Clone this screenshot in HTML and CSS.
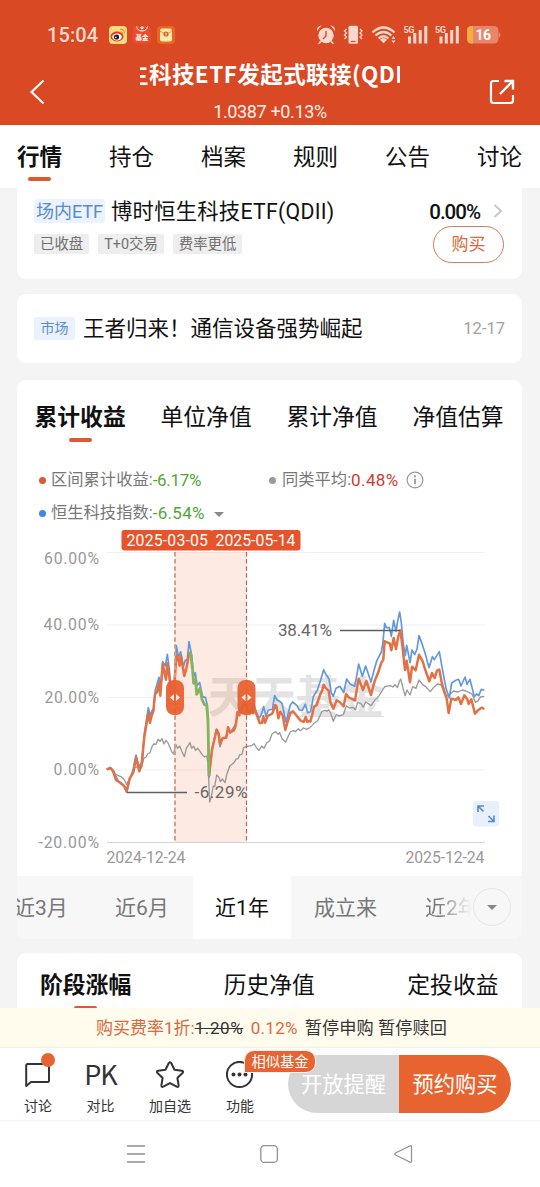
FILE: index.html
```html
<!DOCTYPE html>
<html lang="zh-CN">
<head>
<meta charset="utf-8">
<title>博时恒生科技ETF发起式联接(QDII)</title>
<link rel="stylesheet" href="styles.css">
</head>
<body>
<div class="phone">
  <header class="header">
    <div class="status">
      <span class="clock">15:04</span>
      <svg class="apps" width="68" height="20" viewBox="0 0 68 20">
        <rect x="1" y="1" width="18" height="18" rx="4" fill="#fbdc80"/>
        <ellipse cx="9" cy="11.5" rx="6.5" ry="5" fill="#df3b28"/>
        <ellipse cx="9" cy="12" rx="4.8" ry="3.4" fill="#fff"/>
        <circle cx="8.5" cy="12" r="2.6" fill="#231815"/><circle cx="7.8" cy="12.4" r=".8" fill="#fff"/>
        <path d="M12 4.500c3-.8 5 1.500 4.400 4M12.500 7c1.400-.2 2.200.600 2 1.800" fill="none" stroke="#e99a31" stroke-width="1.200"/>
        <rect x="25" y="1" width="18" height="18" rx="4" fill="#f04a2c"/>
        <path d="M28.500 1.500q1 4.500 5.500 4.500t5.500-4.500M34 1v3.500M32 2l2 2 2-2" fill="none" stroke="#fff" stroke-width="1"/>
        <text x="27.500" y="15.300" textLength="13" class="app-text">基金</text>
        <rect x="49" y="1" width="18" height="18" rx="4" fill="#e8671e"/>
        <rect x="52" y="3.500" width="12" height="13" rx="2" fill="#ffe9ad"/>
        <path d="M52 6q6 5 12 0" fill="none" stroke="#e79a52" stroke-width="1"/><circle cx="58" cy="9" r="2.600" fill="#d96827"/><path d="M58 7.700v2.600" stroke="#ffe9ad"/>
      </svg>
      <svg class="signals" width="186" height="22" viewBox="315 24 186 22">
        <g fill="#fbd8cd" stroke="none">
          <circle cx="326" cy="35.500" r="7.700"/><path d="M317 31q-.5-5 4.500-5.500zM335 31q.5-5-4.500-5.500zM320 41l-2 2.500 1 .7 3-2.500zM332 41l2 2.500-1 .7-3-2.500z"/>
          <rect x="348.500" y="25.700" width="9.500" height="18" rx="1.500"/>
          <path d="M383.500 43.300l-3.500-3.500a5 5 0 0 1 7 0z"/>
          <path d="M391.500 39l2-3 2 3zM391.500 40.500h4l-2 3z"/>
          <path d="M408 36.500h3v7h-3zM413.300 33h3v10.500h-3zM418.700 30h3v13.500h-3zM424.300 26h3v17.500h-3zM439.500 36.500h3v7h-3zM444.800 33h3v10.500h-3zM450.200 30h3v13.500h-3zM455.800 26h3v17.500h-3z"/>
        </g>
        <path d="M326 31v5l-3 3" fill="none" stroke="#d94a24" stroke-width="1.400"/>
        <path d="M351 41.500h4.500" stroke="#d94a24" stroke-width="1.200"/>
        <path d="M346.500 29l-2 2 2 2-2 2 2 2-2 2M360 29l2 2-2 2 2 2-2 2 2 2" fill="none" stroke="#fbd8cd" stroke-width="1.300"/>
        <path d="M372.500 32.500q11-10 22 0M375.500 35.500q8-7 16 0M378.500 38.500q5-4.500 10 0" fill="none" stroke="#fbd8cd" stroke-width="2.200"/>
        <text x="403.500" y="32.500" textLength="11" class="net">5G</text>
        <text x="435" y="32.500" textLength="11" class="net">5G</text>
        <rect x="467" y="26" width="31.500" height="17.500" rx="4.500" fill="#e9866a"/>
        <path d="M473 26h-1.500a4.500 4.500 0 0 0-4.500 4.500v8.500a4.500 4.500 0 0 0 4.500 4.500h1.500z" fill="#f6ad42"/>
        <path d="M499 32l1.800 3-1.800 3z" fill="#e9866a"/>
        <text x="475.500" y="40" textLength="15.500" class="battery">16</text>
      </svg>
    </div>
    <div class="titlebar">
      <svg class="back" width="18" height="26" viewBox="0 0 18 26"><path d="M15.500 1.500L3.500 13l12 11.500" fill="none" stroke="#fff" stroke-width="2.100"/></svg>
      <div class="heading">
        <div class="name"><span>生科技ETF发起式联接(QDII)</span></div>
        <div class="nav-value">1.0387 +0.13%</div>
      </div>
      <svg class="share" width="26" height="26" viewBox="0 0 26 26"><path d="M10 2H4.500Q2 2 2 4.500V21.500Q2 24 4.500 24H21.500Q24 24 24 21.500V16" fill="none" stroke="#fff" stroke-width="2.200"/><path d="M11 15L23 3M15.500 2H24V10.500" fill="none" stroke="#fff" stroke-width="2.400"/></svg>
    </div>
  </header>
  <nav class="tabs">
    <span class="on">行情</span><span>持仓</span><span>档案</span><span>规则</span><span>公告</span><span>讨论</span>
  </nav>

  <main class="content">
    <section class="card etf">
      <div class="etf-row">
        <span class="etf-tag">场内ETF</span><span class="etf-name">博时恒生科技ETF(QDII)</span>
        <span class="etf-rate">0.00%</span>
        <svg width="10" height="16" viewBox="0 0 10 16"><path d="M1.500 2L8 8l-6.500 6" fill="none" stroke="#c9c9c9" stroke-width="2"/></svg>
      </div>
      <div class="etf-foot">
        <span class="tag">已收盘</span><span class="tag">T+0交易</span><span class="tag">费率更低</span>
        <span class="buy">购买</span>
      </div>
    </section>

    <section class="card news">
      <span class="market">市场</span><span class="headline">王者归来！通信设备强势崛起</span><span class="date">12-17</span>
    </section>

    <section class="card returns">
      <div class="subtabs"><span class="on">累计收益</span><span>单位净值</span><span>累计净值</span><span>净值估算</span></div>
      <div class="legend">
        <div class="item own"><i class="dot red"></i><span>区间累计收益:</span><b class="down">-6.17%</b></div>
        <div class="item"><i class="dot gray"></i><span>同类平均:</span><b class="up">0.48%</b>
          <svg class="info" width="18" height="18" viewBox="0 0 18 18"><circle cx="9" cy="9" r="7.900" fill="none" stroke="#999" stroke-width="1.200"/><path d="M9 4.200v2M9 7.700v5.600" stroke="#999" stroke-width="1.800"/></svg></div>
        <div class="item own index"><i class="dot blue"></i><span>恒生科技指数:</span><b class="down">-6.54%</b><i class="caret"></i></div>
      </div>
      <svg class="chart" width="505" height="349" viewBox="17 527 505 349">
        <g stroke="#f1f1f1" stroke-width="1"><path d="M107 552.500H485M107 625H485M107 697.500H485M107 770H485"/></g>
        <path d="M107 842.500H485" stroke="#d4d4d4"/>
        <g class="watermark"><text x="208" y="713" textLength="176" lengthAdjust="spacingAndGlyphs">天天基金</text></g>
        <path d="M298 716.500h86" stroke="#ddd"/>
        <rect x="175" y="552" width="71.500" height="290" fill="#f08962" opacity=".18"/>
        <g class="axis">
          <text x="44" y="564" textLength="55">60.00%</text><text x="43.500" y="630" textLength="55.500">40.00%</text>
          <text x="44.500" y="702.500" textLength="54.500">20.00%</text><text x="53.500" y="775" textLength="45.500">0.00%</text>
          <text x="38.500" y="847.500" textLength="60.500">-20.00%</text>
          <text x="106.500" y="862.500" textLength="79">2024-12-24</text><text x="405.500" y="862.500" textLength="79">2025-12-24</text>
        </g>
        <g fill="none" stroke-linejoin="round">
          <g transform="translate(90 530) scale(.33333)">
            <path class="line-avg" d="M50 718L60 715 69 720 77 733 87 738 95 741 103 750 110 763 118 748 125 736 134 714 142 710 148 704 155 712 161 686 168 681 173 672 180 668 185 652 191 642 198 643 204 628 210 634 216 626 222 642 228 631 233 637 239 650 246 667 251 672 257 643 263 655 269 648 276 665 283 680 289 655 300 638 305 655 311 649 317 661 323 655 330 664 337 675 344 681 350 678 354 700 359 816 363 805 370 768 374 770 380 735 387 742 391 755 397 747 405 758 411 731 419 708 430 700 439 687 444 686 449 674 456 673 461 652 472 649 485 647 492 641 500 654 507 661 515 648 522 655 530 639 539 632 546 612 557 605 565 613 569 608 577 628 587 636 594 620 601 606 610 602 616 605 625 596 631 602 641 594 650 598 660 593"/>
            <path class="line-index" d="M50 718L62 712 69 727 78 740 87 756 100 764 110 787 118 750 130 717 138 675 148 714 156 693 163 612 175 533 181 558 186 541 191 537 196 480 207 442 212 474 218 395 226 408 232 373 238 417 245 499 251 490 259 347 266 382 272 365 280 410 286 391 292 389 297 335 305 375 311 440 316 428 321 466 329 458 338 500 346 502 352 525 357 742 367 655 379 598 386 617 390 650 396 625 408 621 415 592 421 609 436 584 444 545 453 535 461 520 468 490 478 515 486 535 491 521 499 546 507 565 513 556 521 530 528 559 535 540 547 538 554 497 562 511 569 514 576 520 588 576 601 525 608 516 621 527 628 540 637 541 646 523 653 548 660 546"/>
            <path class="line-fund" d="M50 718L62 715 69 722 78 750 92 759 103 769 110 784 119 746 130 727 138 683 148 724 155 703 163 620 175 550 180 578 185 557 190 544 195 492 201 486 207 459 211 497 218 402 228 449 232 400 238 441 243 488 251 504 259 374 264 383 269 407 273 379 283 438 290 412 298 365"/>
            <path class="line-fund" d="M357 738L366 659 380 599 386 610 390 643 398 625 409 623 414 592 420 607 432 601 438 583 442 547 448 556 454 536 466 518 479 551 485 537 489 550 495 541 509 579 516 579 520 559 525 578 533 558 547 551 556 525 560 530 565 565 571 545 578 556 586 600 601 549 609 544 621 559 631 571 641 576 647 561 652 576 660 572"/>
            <path class="line-drop" d="M298 365L303 378 308 422 311 460 317 448 320 493 330 475 336 508 343 523 350 526 354 570 357 738"/>
          </g>
          <g transform="translate(300 590) scale(.33333)">
            <path class="line-avg" d="M30 413L42 400 53 392 66 364 75 361 81 364 86 359 91 367 100 394 109 373 117 378 130 374 139 347 148 354 160 352 166 360 173 338 183 341 190 351 197 336 204 340 213 347 224 331 238 316 254 290 271 287 279 291 285 284 292 293 298 275 302 267 307 286 315 317 321 300 330 315 338 290 348 295 357 270 368 284 377 290 391 305 401 292 413 282 424 285 433 310 438 320 447 314 461 303 475 306 487 300 497 303 508 308 517 313 526 337 535 332 541 321 553 319"/>
            <path class="line-index" d="M30 366L32 365 40 320 52 300 62 270 67 253 71 239 76 250 87 267 94 309 100 319 108 295 120 289 131 308 140 267 150 282 164 289 171 253 176 222 187 259 197 228 204 249 213 276 222 241 231 211 244 186 249 156 254 100 259 113 268 113 274 139 281 91 288 124 293 94 299 66 304 99 310 163 316 197 320 166 324 185 330 218 336 180 344 194 351 177 357 137 366 161 375 188 387 233 397 200 403 209 418 185 424 220 432 263 438 295 448 324 455 279 467 271 476 268 483 288 495 261 501 283 510 268 516 292 523 320 530 312 536 317 544 298 553 301"/>
            <path class="line-fund" d="M30 392L31 395 38 369 42 351 50 345 60 315 66 303 71 284 76 293 86 302 91 336 100 356 110 331 119 336 131 349 138 312 146 322 165 331 172 289 176 266 189 300 199 273 213 315 224 273 235 247 243 220 250 209 254 154 269 160 274 181 281 144 288 177 295 139 301 121 307 166 315 240 320 212 330 277 336 230 347 241 357 194 368 214 376 240 388 274 396 249 404 264 411 242 418 239 426 282 440 326 446 369 454 326 467 330 475 322 483 342 493 316 502 328 506 342 514 328 525 371 536 359 545 353 553 357"/>
          </g>
        </g>
        <path d="M127 792.500H187M340 630.500H400" stroke="#606060" stroke-width="1.300"/>
        <g class="mark"><text x="194.500" y="798" textLength="53">-6.29%</text><text x="278" y="636" textLength="54">38.41%</text></g>
        <path d="M175 552V842" stroke="#e19b80" stroke-width="2" stroke-dasharray="4.500 2.600"/>
        <path d="M246.500 552V842" stroke="#bd654a" stroke-width="1.200" stroke-dasharray="4.500 2.600"/>
        <g fill="#e9602f" opacity=".94"><rect x="166" y="680" width="18" height="35" rx="8"/><rect x="237.500" y="680" width="18" height="35" rx="8"/></g>
        <path d="M174 694v7l-4-3.500zM176 694v7l4-3.500zM245.500 694v7l-4-3.500zM247.500 694v7l4-3.500z" fill="#fff0e8"/>
        <g fill="#e7532a"><rect x="121.500" y="530" width="91" height="20.500" rx="3"/><rect x="211" y="530" width="89.500" height="20.500" rx="3"/></g>
        <g class="flag"><text x="126.500" y="546.300" textLength="81.500">2025-03-05</text><text x="215.500" y="546.300" textLength="80">2025-05-14</text></g>
        <rect x="473" y="801" width="26" height="25.500" rx="3" fill="#e8f0fc"/>
        <path d="M484 806h-6v6M478.500 806.500l5 5M488 821.500h6v-6M493.500 821l-5-5" fill="none" stroke="#5087dc" stroke-width="1.600"/>
      </svg>
      <div class="periods">
        <span class="p3">近3月</span><span class="p6">近6月</span><span class="p1 sel">近1年</span><span class="pa">成立来</span><span class="p2">近2年</span>
        <i class="more"><i class="caret"></i></i>
      </div>
    </section>

    <section class="card stages"><span class="on">阶段涨幅</span><span>历史净值</span><span>定投收益</span></section>
  </main>

  <div class="notice"><span class="fee">购买费率1折:</span><s>1.20%</s><span class="fee low">0.12%</span><span class="halt">暂停申购 暂停赎回</span></div>
  <footer class="actions">
    <div class="act"><svg width="28" height="28" viewBox="0 0 28 28"><path d="M2.200 25V4.500Q2.200 3 3.700 3H23.500Q25 3 25 4.500V19.500Q25 21 23.500 21H7z" fill="none" stroke="#333" stroke-width="2" stroke-linejoin="round"/></svg><span>讨论</span><i class="badge"></i></div>
    <div class="act"><div class="pk">PK</div><span>对比</span></div>
    <div class="act"><svg width="30" height="28" viewBox="0 0 30 28"><path d="M15 1.200Q15.800 1.200 16.300 2.200L19.500 8.700 26.800 9.800Q29 10.300 27.500 12L22.400 17 23.600 24.200Q23.800 26.600 21.700 25.600L15 22.100 8.300 25.600Q6.200 26.600 6.400 24.200L7.600 17 2.500 12Q1 10.300 3.200 9.800L10.500 8.700 13.700 2.200Q14.200 1.200 15 1.200z" fill="none" stroke="#333" stroke-width="2" stroke-linejoin="round"/></svg><span>加自选</span></div>
    <div class="act"><svg width="28" height="28" viewBox="0 0 28 28"><circle cx="13.500" cy="13.500" r="12.600" fill="none" stroke="#333" stroke-width="2"/><g fill="#333"><circle cx="7.500" cy="13.500" r="2"/><circle cx="13.500" cy="13.500" r="2"/><circle cx="19.500" cy="13.500" r="2"/></g></svg><span>功能</span><em class="similar">相似基金</em></div>
    <div class="cta"><span class="remind">开放提醒</span><span class="order">预约购买</span></div>
  </footer>
  <div class="sysnav">
    <svg width="18" height="20" viewBox="0 0 18 20"><path d="M0 2H18M0 10H18M0 18H18" stroke="#8f8f8f" stroke-width="1.500"/></svg>
    <svg width="20" height="20" viewBox="0 0 20 20"><rect x="1.800" y="1.600" width="16.600" height="16.800" rx="3.500" fill="none" stroke="#8f8f8f" stroke-width="1.300"/></svg>
    <svg width="20" height="20" viewBox="0 0 20 20"><path d="M18.500 3V17Q18.500 19 16.800 18L2.500 11Q1 10 2.500 9L16.800 2Q18.500 1 18.500 3z" fill="none" stroke="#8f8f8f" stroke-width="1.200"/></svg>
  </div>
</div>
</body>
</html>
```
FILE: styles.css
```css
* { box-sizing: border-box; }
body { margin: 0; font-family: Roboto, "Noto Sans CJK SC", sans-serif; color: #111; background: #fff; }
.phone { width: 540px; height: 1187px; display: flex; flex-direction: column; overflow: hidden; white-space: nowrap; }
svg { display: block; flex: none; }
i, em { font-style: normal; }

.header { height: 125px; flex: none; background: #d94923; color: #fff; }
.status { display: flex; align-items: center; height: 58px; padding: 12px 39px 0 47px; }
.clock { width: 61px; font: 500 20px/24px Roboto, sans-serif; color: #fbd8cd; letter-spacing: .1px; }
.signals { margin-left: auto; }
.app-text { font-size: 6.500px; font-weight: 700; fill: #fff; }
.net { font: 700 9px Roboto, sans-serif; fill: #fbd8cd; }
.battery { font: 700 14px Roboto, sans-serif; fill: #fff; }
.titlebar { display: flex; height: 67px; padding: 0 25px 0 28px; }
.back, .share { margin-top: 21px; }
.heading { width: 260px; margin: 0 auto 0 94px; text-align: center; }
.name { height: 34px; overflow: hidden; display: flex; font: 700 22.500px/30px "Noto Sans CJK SC", sans-serif; letter-spacing: .45px; }
.name span { margin-left: -14px; }
.nav-value { font-size: 18px; line-height: 40px; color: #fff0ea; letter-spacing: -.35px; }

.tabs { display: flex; gap: 47px; height: 63px; flex: none; padding: 15px 0 0 17px; font-size: 22.500px; line-height: 34px; }
.tabs .on { font-weight: 700; }
.tabs .on::after, .subtabs .on::after, .stages .on::after { content: ""; display: block; width: 23px; height: 4px; border-radius: 2px; margin: 3px auto 0; background: #dd5932; }

.content { height: 820px; flex: none; background: #f4f4f4; padding: 0 18px 0 17px; overflow: hidden; }
.card { background: #fff; border-radius: 9px; }
.etf { height: 91px; border-radius: 0 0 9px 9px; padding: 8px 17px 0; }
.etf-row { display: flex; align-items: center; height: 30px; }
.etf-tag { width: 71px; height: 24px; line-height: 25px; border-radius: 4px; text-align: center; font-size: 18px; color: #5a8bd0; background: #ebf3ff; }
.etf-name { margin-left: 6px; font-size: 21.300px; line-height: 30px; padding-top: 1px; letter-spacing: .27px; }
.etf-rate { margin-left: auto; font-size: 20.500px; font-weight: 500; letter-spacing: -1px; margin-right: 13px; padding-top: 2px; }
.etf-row svg { margin-right: 2px; }
.etf-foot { display: flex; align-items: center; height: 36px; }
.tag { height: 20px; line-height: 21px; padding: 0 6px; margin-right: 9px; border-radius: 2px; background: #eee; color: #707070; font-size: 14.400px; }
.buy { margin-left: auto; margin-right: 1px; width: 71px; height: 37px; line-height: 34px; border: 1px solid #dc7956; border-radius: 19px; color: #d96a3d; text-align: center; font-size: 17px; }
.news { height: 69px; margin-top: 15px; padding: 0 17px; display: flex; align-items: center; }
.market { width: 41px; height: 23px; line-height: 22px; text-align: center; border-radius: 2px; background: #e9f2fe; color: #5a8bd0; font-size: 14px; }
.headline { margin-left: 8px; font-size: 21.500px; line-height: 30px; }
.date { margin-left: auto; color: #a2a2a2; font-size: 16.500px; padding-bottom: 1px; }

.returns { height: 559px; margin-top: 17px; overflow: hidden; }
.subtabs { display: flex; gap: 34.800px; height: 85px; padding: 21px 0 0 17.500px; font-size: 22.800px; line-height: 34px; }
.subtabs .on { font-weight: 700; }
.legend { display: grid; grid-template-columns: 230px 1fr; grid-auto-rows: 33px; height: 62px; padding-left: 22px; font-size: 16.300px; color: #777; }
.item { display: flex; align-items: center; height: 30px; line-height: 28px; }
.item b { font-weight: 400; font-size: 17px; letter-spacing: -.3px; }
.item .up { letter-spacing: .4px; }
.index .down { letter-spacing: .3px; }
.item .caret { margin-top: 2px; margin-left: 9px; }
.dot { width: 7px; height: 7px; border-radius: 50%; margin-right: 6px; }
.red { background: #df5a32; } .gray { background: #999; } .blue { background: #4386e0; }
.own .dot { margin-right: 5px; }
.down { color: #50a735; } .up { color: #cc3d30; }
.info { margin-left: 7px; }
.caret { border: 5px solid transparent; border-top-color: #888; border-bottom: 0; }
.axis { font-size: 15.800px; fill: #999; }
.mark { font-size: 17px; fill: #666; }
.flag { font-size: 15.800px; fill: #fff; }
.watermark { font: 700 44px "Noto Sans CJK SC", sans-serif; fill: #e3e3e3; }
.line-avg { stroke: #999; stroke-width: 4; }
.line-index { stroke: #6098df; stroke-width: 5; }
.line-fund { stroke: #e27145; stroke-width: 7.500; }
.line-drop { stroke: #83b55e; stroke-width: 8.500; }
.periods { position: relative; display: flex; height: 63px; line-height: 64px; background: #f7f7f7; font-size: 21px; color: #777; }
.p3 { width: 98px; margin-left: -3px; }
.p6 { width: 81px; padding-left: 3px; }
.periods .sel { width: 98px; background: #fff; color: #111; text-align: center; }
.pa { width: 111px; padding-left: 23px; }
.p2 { width: 50px; margin-left: 23px; overflow: hidden; color: transparent; background: linear-gradient(90deg, #777 25%, #f7f7f7 92%); background-clip: text; -webkit-background-clip: text; }
.more { position: absolute; right: 11px; top: 12px; width: 38px; height: 38px; border: 1px solid #e5e5e5; border-radius: 50%; display: flex; align-items: center; justify-content: center; }
.stages { height: 70px; margin-top: 14px; padding: 16px 23.500px 0 23px; display: flex; justify-content: space-between; font-size: 22.800px; line-height: 34px; }
.stages .on { font-weight: 700; }

.notice { height: 40px; flex: none; display: flex; align-items: center; padding-left: 96px; background: #fffced; font-size: 17px; color: #333; border-bottom: 1px solid #f3f0e7; line-height: 30px; }
.notice span, .notice s { padding-top: 1px; }
.notice s { width: 49px; letter-spacing: .6px; }
.fee { color: #d96a3d; } .low { margin-left: 7px; letter-spacing: .3px; } .halt { margin-left: 7px; font-size: 17.200px; letter-spacing: .05px; }
.actions { height: 73px; flex: none; display: flex; padding-left: 3px; border-bottom: 1px solid #f4f4f4; position: relative; }
.act { position: relative; width: 70px; padding-top: 13px; display: flex; flex-direction: column; align-items: center; font-size: 14px; color: #333; line-height: 20px; }
.act:nth-child(2) { width: 55px; } .act:nth-child(3) { width: 84px; } .act:nth-child(4) { width: 56px; }
.act > span { margin-top: 6.500px; }
.pk { height: 28px; font: 400 27px/26px "Noto Sans CJK SC", sans-serif; letter-spacing: -1px; }
.badge { position: absolute; left: 38px; top: 5px; width: 14px; height: 14px; border-radius: 50%; background: #e66432; }
.similar { position: absolute; left: 32px; top: 2px; z-index: 2; width: 72px; height: 23px; border: 1px solid #fff1e9; border-radius: 10px 10px 10px 0; background: #e66432; color: #fff; text-align: center; font-size: 14.300px; line-height: 22px; }
.cta { position: relative; display: flex; width: 223px; height: 58px; margin: 7px 0 0 20px; border-radius: 29px; overflow: hidden; font-size: 21.300px; line-height: 60px; color: #fff; text-align: center; }
.remind { width: 111px; background: #d6d6d6; } .order { width: 112px; background: #e76430; }
.sysnav { flex: 1; display: flex; justify-content: space-between; padding: 23px 127px 0; }
```
